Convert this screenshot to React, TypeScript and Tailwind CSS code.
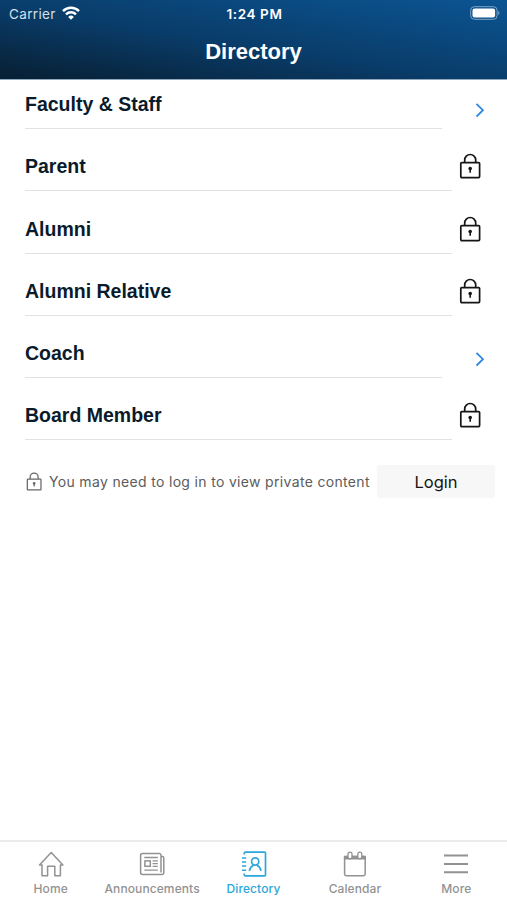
import type { ReactNode } from 'react';

interface DirectoryEntry {
  name: string;
  locked: boolean;
}

interface TabProps {
  label: string;
  active?: boolean;
  children: ReactNode;
}

const entries: DirectoryEntry[] = [
  { name: 'Faculty & Staff', locked: false },
  { name: 'Parent', locked: true },
  { name: 'Alumni', locked: true },
  { name: 'Alumni Relative', locked: true },
  { name: 'Coach', locked: false },
  { name: 'Board Member', locked: true },
];

function LockIcon({ className }: { className: string }) {
  return (
    <svg viewBox="0 0 22 26" className={className} fill="none" stroke="currentColor" strokeWidth="1.7">
      <rect x="1.8" y="9.6" width="18.8" height="15" rx="1" />
      <path d="M5.7 9.6V7a5.5 5.5 0 0 1 11 0v2.6" />
      <circle cx="11.2" cy="15.6" r="1.8" fill="currentColor" stroke="none" />
      <path d="M11.2 15.5v4.3" strokeWidth="1.6" />
    </svg>
  );
}

function ChevronIcon({ className }: { className: string }) {
  return (
    <svg viewBox="0 0 10 16" className={className} fill="none" stroke="currentColor" strokeWidth="1.8">
      <path d="M1.5 1.8 7.9 8.2 1.5 14.6" />
    </svg>
  );
}

function StatusBar() {
  return (
    <div className="h-7 grid grid-cols-3 items-center pl-[9px] pr-[7px] font-['Inter',sans-serif] text-white">
      <div className="flex items-center gap-1.5">
        <span className="text-[13.5px] tracking-[0.35px] text-[#d5e0ea]">Carrier</span>
        <svg viewBox="0 0 18 14" className="w-[18px] h-3.5 -mt-0.5" fill="none" stroke="currentColor" strokeWidth="2.4">
          <path d="M1 5.1a11.4 11.4 0 0 1 16 0" />
          <path d="M4 8.3a7.1 7.1 0 0 1 10 0" />
          <path d="M9 13.7 6.2 10.9a4 4 0 0 1 5.6 0Z" fill="currentColor" stroke="none" />
        </svg>
      </div>
      <span className="text-center text-[13.5px] font-semibold tracking-[0.6px] whitespace-nowrap">1:24 PM</span>
      <svg viewBox="0 0 30 14" className="w-[30px] h-3.5 -mt-0.5 justify-self-end" fill="none">
        <rect x="0.7" y="0.7" width="26.4" height="12.6" rx="3.6" stroke="#7fa3c5" strokeWidth="1" />
        <rect x="2.5" y="2.4" width="22.6" height="9.2" rx="2" fill="white" />
        <path d="M28.3 4.8v4.4c1.6-.7 1.6-3.7 0-4.4Z" fill="#7fa3c5" />
      </svg>
    </div>
  );
}

function DirectoryRow({ name, locked }: DirectoryEntry) {
  return (
    <div className="h-[62.3px] first:h-[49px] flex items-end">
      <div className={`border-b border-[#e2e2e2] pb-3 ${locked ? 'w-[427px]' : 'w-[417px]'}`}>
        <span className="block text-[19.5px] leading-6 font-bold text-[#0a1b2b]">{name}</span>
      </div>
      {locked ? (
        <LockIcon className="ml-[7px] mb-3 w-[22px] h-[26px] text-[#151515]" />
      ) : (
        <ChevronIcon className="ml-[33px] mb-[11px] w-2.5 h-4 text-[#2b86e6]" />
      )}
    </div>
  );
}

function Tab({ label, active = false, children }: TabProps) {
  return (
    <button
      className={`flex-1 basis-0 min-w-0 flex flex-col items-center pt-[9px] ${active ? 'text-[#2da6da]' : 'text-[#929292]'}`}
    >
      <svg viewBox="0 0 26 26" className="w-[26px] h-[26px]" fill="none" stroke="currentColor" strokeWidth="1.5">
        {children}
      </svg>
      <span className="mt-[3px] text-[12px] leading-[18px] font-medium tracking-[0.1px] whitespace-nowrap">{label}</span>
    </button>
  );
}

function TabBar() {
  return (
    <nav className="h-[60px] flex border-t-2 border-[#ebebeb] font-['Inter',sans-serif]">
      <Tab label="Home">
        <path d="M1.5 13.9 13.2 1.6 24.9 13.9h-2.5v10.8h-5.6v-9.5H9.6v9.5H4V13.9Z" strokeLinejoin="round" />
      </Tab>
      <Tab label="Announcements">
        <path d="M22 5.6h1.3a1.5 1.5 0 0 1 1.5 1.5v14.4a2 2 0 0 1-2 2H3.6a2 2 0 0 1-2-2V4.2a1.8 1.8 0 0 1 1.8-1.8h16.8A1.8 1.8 0 0 1 22 4.2v17.3" />
        <rect x="5.9" y="9.9" width="5.4" height="5.4" />
        <path d="M5.3 6.5h13.5M13.6 9.9h5.2M13.6 12.6h5.2M13.6 15.3h5.2M5.3 19.1h13.5" strokeWidth="1.3" />
      </Tab>
      <Tab label="Directory" active>
        <path d="M3.3 3.6V2.2c0-.7.4-1.1 1.1-1.1h19c.7 0 1.1.4 1.1 1.1v21.6c0 .7-.4 1.1-1.1 1.1h-19c-.7 0-1.1-.4-1.1-1.1v-1.4" strokeWidth="1.7" />
        <path d="M1 6.9h4.2M1 10.9h4.2M1 15.1h4.2M1 19.2h4.2" strokeWidth="1.5" />
        <circle cx="14.2" cy="10.5" r="3.6" strokeWidth="1.7" />
        <path d="M8.4 19.8c.4-3 2.3-4.7 4.1-5.5M20 19.8c-.4-3-2.3-4.7-4.1-5.5" strokeWidth="1.7" />
      </Tab>
      <Tab label="Calendar">
        <rect x="2.6" y="5.4" width="20.6" height="19.3" rx="1.6" />
        <path d="M2.6 5.4h20.6v2.4H2.6Z" fill="currentColor" />
        <rect x="6" y="1.2" width="4" height="6.6" rx="2" fill="white" strokeWidth="1.3" />
        <rect x="15.8" y="1.2" width="4" height="6.6" rx="2" fill="white" strokeWidth="1.3" />
      </Tab>
      <Tab label="More">
        <path d="M1 4.6h24M1 12.9h24M1 21.2h24" strokeWidth="2" />
      </Tab>
    </nav>
  );
}

function App() {
  return (
    <div className="h-screen flex flex-col overflow-hidden bg-white font-['Liberation_Sans',Arial,sans-serif]">
      <header className="h-20 shrink-0 border-b border-[#8fa8bd] bg-linear-to-tr from-[#071f33] via-[#093c69] via-45% to-[#0b5594]">
        <StatusBar />
        <h1 className="pt-2.5 text-center text-[22px] leading-7 font-bold text-white">Directory</h1>
      </header>

      <main className="flex-1">
        <div className="pl-[25px]">
          {entries.map((entry) => (
            <DirectoryRow key={entry.name} {...entry} />
          ))}
        </div>

        <div className="mt-[25px] pl-[26px] pr-3 flex items-center font-['Inter',sans-serif]">
          <LockIcon className="w-4 h-[19px] text-[#666666]" />
          <span className="ml-[7px] text-[14px] tracking-[0.33px] whitespace-nowrap text-[#5c5c5c]">
            You may need to log in to view private content
          </span>
          <button className="ml-auto w-[118px] h-[33px] rounded-[3px] bg-[#f7f7f7] text-[16.5px] text-[#151515]">
            Login
          </button>
        </div>
      </main>

      <TabBar />
    </div>
  );
}

export default App;
